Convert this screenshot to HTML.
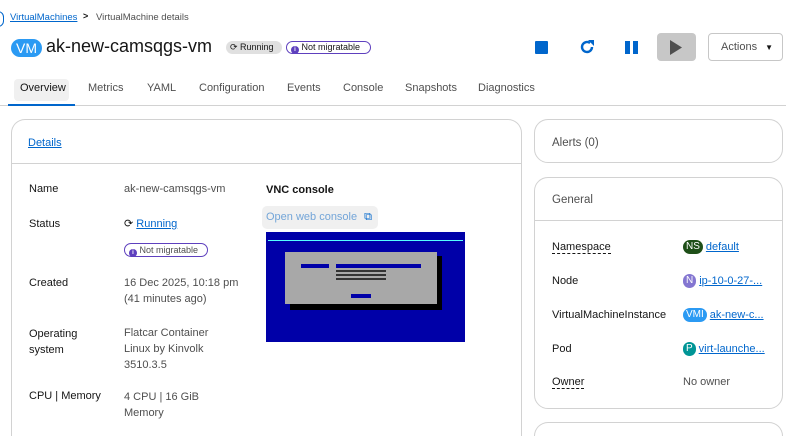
<!DOCTYPE html>
<html style="width:786px;height:436px;overflow:hidden"><head><style>
*{margin:0;padding:0;box-sizing:border-box}
body{width:786px;height:436px;overflow:hidden;background:#fff;font-family:"Liberation Sans",sans-serif;color:#151515;position:relative}
.a{position:absolute;white-space:nowrap}
.lk{color:#0066cc;text-decoration:underline}
.lbl{font-size:11px;color:#151515}
.val{font-size:11px;color:#4f4f4f;line-height:16px}
.card{position:absolute;border:1px solid #d2d2d2;border-radius:14px;background:#fff}
.open{border-bottom:none;border-bottom-left-radius:0;border-bottom-right-radius:0}
.tab{position:absolute;top:82px;font-size:11px;color:#4f4f4f}
.dash{border-bottom:1px dashed #151515}
.ic{display:inline-block;border-radius:8px;color:#fff;font-size:10px;padding:0 3px;line-height:14px;vertical-align:middle;margin-right:3px}
.i{display:inline-block;width:8px;height:8px;border-radius:4px;background:#5e40be;color:#fff;font-size:6px;text-align:center;line-height:8px;vertical-align:-1px;font-weight:bold}
</style></head><body>
<div class="a" style="left:-8px;top:11px;width:12px;height:16px;border:1.5px solid #0066cc;border-radius:8px"></div>
<div class="a lk" style="left:10px;top:12px;font-size:9.5px">VirtualMachines</div>
<div class="a" style="left:83px;top:11px;font-size:9px;font-weight:bold">&gt;</div>
<div class="a" style="left:96px;top:12px;font-size:9.5px;color:#4f4f4f">VirtualMachine details</div>

<div class="a" style="left:11px;top:39px;width:31px;height:18px;border-radius:9px;background:#2b9af3;color:#fff;font-size:14px;text-align:center;line-height:18px">VM</div>
<div class="a" style="left:46px;top:36px;font-size:18px;color:#151515">ak-new-camsqgs-vm</div>
<div class="a" style="left:226px;top:41px;width:56px;height:13px;border-radius:7px;background:#e0e0e0;font-size:9px;line-height:13px;padding-left:4px">⟳ Running</div>
<div class="a" style="left:286px;top:41px;width:85px;height:13px;border-radius:7px;border:1px solid #5e40be;font-size:9px;line-height:11px;padding-left:4px"><span class="i">i</span> Not migratable</div>

<div class="a" style="left:535px;top:41px;width:13px;height:13px;background:#0066cc;border-radius:1px"></div>
<svg class="a" style="left:578px;top:38px" width="18" height="18" viewBox="0 0 18 18"><path d="M14 9a5 5 0 1 1-2-4" fill="none" stroke="#0066cc" stroke-width="2.4"/><path d="M10 2h6v6z" fill="#0066cc"/></svg>
<div class="a" style="left:625px;top:41px;width:5px;height:13px;background:#0066cc"></div>
<div class="a" style="left:633px;top:41px;width:5px;height:13px;background:#0066cc"></div>
<div class="a" style="left:657px;top:33px;width:39px;height:28px;background:#c7c7c7;border-radius:4px"></div>
<svg class="a" style="left:669px;top:40px" width="14" height="15"><path d="M1 0L13 7.5L1 15z" fill="#4f4f4f"/></svg>
<div class="a" style="left:708px;top:33px;width:75px;height:28px;border:1px solid #c7c7c7;border-radius:4px;font-size:11px;color:#4f4f4f;line-height:26px;padding-left:12px">Actions <span style="font-size:8px;color:#151515;margin-left:5px">▼</span></div>

<div class="a" style="left:14px;top:79px;width:55px;height:22px;background:#f0f0f0;border-radius:4px"></div>
<div class="tab" style="left:20px;color:#151515">Overview</div>
<div class="tab" style="left:88px">Metrics</div>
<div class="tab" style="left:147px">YAML</div>
<div class="tab" style="left:199px">Configuration</div>
<div class="tab" style="left:287px">Events</div>
<div class="tab" style="left:343px">Console</div>
<div class="tab" style="left:405px">Snapshots</div>
<div class="tab" style="left:478px">Diagnostics</div>
<div class="a" style="left:0;top:105px;width:786px;height:1px;background:#d2d2d2"></div>
<div class="a" style="left:8px;top:104px;width:67px;height:2px;background:#0066cc"></div>

<div class="card open" style="left:11px;top:119px;width:511px;height:317px"></div>
<div class="a lk" style="left:28px;top:137px;font-size:11px">Details</div>
<div class="a" style="left:12px;top:163px;width:509px;height:1px;background:#d2d2d2"></div>
<div class="a lbl" style="left:29px;top:183px">Name</div>
<div class="a val" style="left:124px;top:181px">ak-new-camsqgs-vm</div>
<div class="a lbl" style="left:29px;top:218px">Status</div>
<div class="a val" style="left:124px;top:216px;color:#151515">⟳ <span class="lk">Running</span></div>
<div class="a" style="left:124px;top:243px;width:84px;height:14px;border-radius:7px;border:1px solid #5e40be;font-size:9px;line-height:12px;padding-left:4px;color:#4f4f4f"><span class="i">i</span> Not migratable</div>
<div class="a lbl" style="left:29px;top:277px">Created</div>
<div class="a val" style="left:124px;top:275px">16 Dec 2025, 10:18 pm<br>(41 minutes ago)</div>
<div class="a lbl" style="left:29px;top:326px;line-height:16px">Operating<br>system</div>
<div class="a val" style="left:124px;top:325px">Flatcar Container<br>Linux by Kinvolk<br>3510.3.5</div>
<div class="a lbl" style="left:29px;top:390px">CPU | Memory</div>
<div class="a val" style="left:124px;top:389px">4 CPU | 16 GiB<br>Memory</div>

<div class="a" style="left:266px;top:184px;font-size:11px;font-weight:bold">VNC console</div>
<div class="a" style="left:262px;top:206px;width:116px;height:23px;background:#f0f0f0;border-radius:5px"></div>
<div class="a" style="left:266px;top:211px;font-size:11px;color:#73a5d8">Open web console <span style="color:#0066cc;margin-left:4px">⧉</span></div>
<div class="a" style="left:266px;top:232px;width:199px;height:110px;background:#0000a8">
 <div class="a" style="left:2px;top:8px;width:195px;height:1px;background:#5ff"></div>
 <div class="a" style="left:24px;top:24px;width:152px;height:54px;background:#000"></div>
 <div class="a" style="left:19px;top:20px;width:152px;height:52px;background:#a8a8a8"></div>
 <div class="a" style="left:70px;top:32px;width:85px;height:4px;background:#0000a8"></div>
 <div class="a" style="left:35px;top:32px;width:28px;height:4px;background:#0000a8"></div>
 <div class="a" style="left:70px;top:38px;width:50px;height:2px;background:#333"></div>
 <div class="a" style="left:70px;top:42px;width:50px;height:2px;background:#333"></div>
 <div class="a" style="left:70px;top:46px;width:50px;height:2px;background:#333"></div>
 <div class="a" style="left:85px;top:62px;width:20px;height:4px;background:#0000a8"></div>
</div>

<div class="card" style="left:534px;top:119px;width:249px;height:44px"></div>
<div class="a" style="left:552px;top:137px;font-size:11.5px;color:#4f4f4f">Alerts (0)</div>
<div class="card" style="left:534px;top:177px;width:249px;height:232px"></div>
<div class="a" style="left:552px;top:194px;font-size:11.5px;color:#4f4f4f">General</div>
<div class="a" style="left:535px;top:220px;width:247px;height:1px;background:#d2d2d2"></div>
<div class="a lbl dash" style="left:552px;top:241px">Namespace</div>
<div class="a val" style="left:683px;top:239px"><span class="ic" style="background:#1e4f18">NS</span><span class="lk">default</span></div>
<div class="a lbl" style="left:552px;top:275px">Node</div>
<div class="a val" style="left:683px;top:273px"><span class="ic" style="background:#8476d1">N</span><span class="lk">ip-10-0-27-...</span></div>
<div class="a lbl" style="left:552px;top:309px">VirtualMachineInstance</div>
<div class="a val" style="left:683px;top:307px"><span class="ic" style="background:#2b9af3">VMI</span><span class="lk">ak-new-c...</span></div>
<div class="a lbl" style="left:552px;top:343px">Pod</div>
<div class="a val" style="left:683px;top:341px"><span class="ic" style="background:#009596">P</span><span class="lk">virt-launche...</span></div>
<div class="a lbl dash" style="left:552px;top:376px">Owner</div>
<div class="a val" style="left:683px;top:374px">No owner</div>
<div class="card open" style="left:534px;top:422px;width:249px;height:14px"></div>
</body></html>
